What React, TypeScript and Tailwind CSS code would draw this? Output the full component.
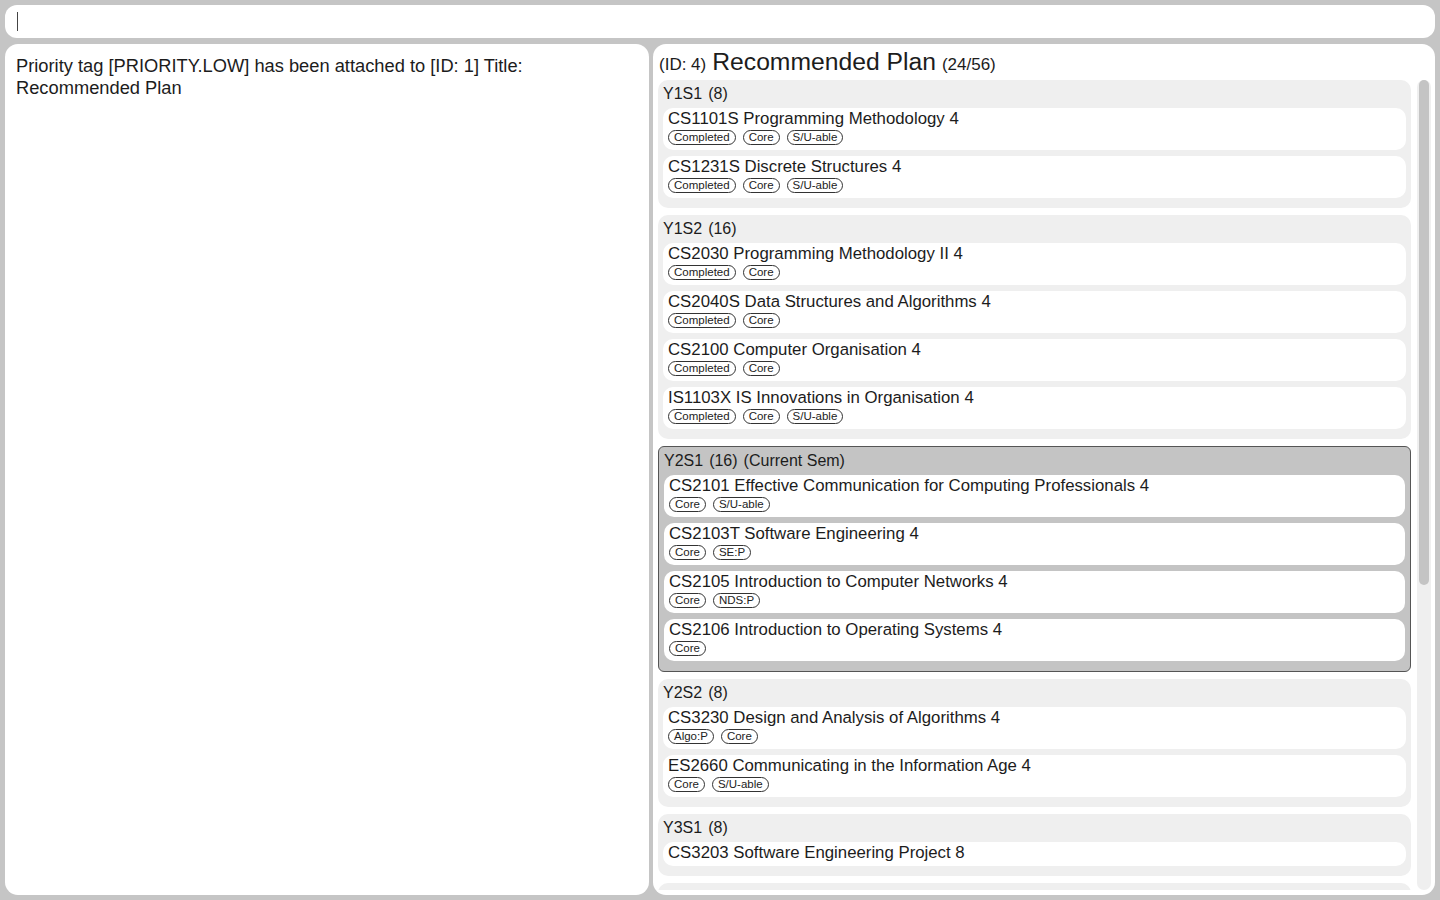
import React from "react";

type Mod = { code: string; title: string; mc: number; tags: string[] };
type Sem = { name: string; mc: number; current?: boolean; mods: Mod[] };

const sems: Sem[] = [
  {
    name: "Y1S1",
    mc: 8,
    mods: [
      { code: "CS1101S", title: "Programming Methodology", mc: 4, tags: ["Completed", "Core", "S/U-able"] },
      { code: "CS1231S", title: "Discrete Structures", mc: 4, tags: ["Completed", "Core", "S/U-able"] },
    ],
  },
  {
    name: "Y1S2",
    mc: 16,
    mods: [
      { code: "CS2030", title: "Programming Methodology II", mc: 4, tags: ["Completed", "Core"] },
      { code: "CS2040S", title: "Data Structures and Algorithms", mc: 4, tags: ["Completed", "Core"] },
      { code: "CS2100", title: "Computer Organisation", mc: 4, tags: ["Completed", "Core"] },
      { code: "IS1103X", title: "IS Innovations in Organisation", mc: 4, tags: ["Completed", "Core", "S/U-able"] },
    ],
  },
  {
    name: "Y2S1",
    mc: 16,
    current: true,
    mods: [
      { code: "CS2101", title: "Effective Communication for Computing Professionals", mc: 4, tags: ["Core", "S/U-able"] },
      { code: "CS2103T", title: "Software Engineering", mc: 4, tags: ["Core", "SE:P"] },
      { code: "CS2105", title: "Introduction to Computer Networks", mc: 4, tags: ["Core", "NDS:P"] },
      { code: "CS2106", title: "Introduction to Operating Systems", mc: 4, tags: ["Core"] },
    ],
  },
  {
    name: "Y2S2",
    mc: 8,
    mods: [
      { code: "CS3230", title: "Design and Analysis of Algorithms", mc: 4, tags: ["Algo:P", "Core"] },
      { code: "ES2660", title: "Communicating in the Information Age", mc: 4, tags: ["Core", "S/U-able"] },
    ],
  },
  {
    name: "Y3S1",
    mc: 8,
    mods: [{ code: "CS3203", title: "Software Engineering Project", mc: 8, tags: [] }],
  },
  {
    name: "Y3S2",
    mc: 4,
    mods: [{ code: "CS3244", title: "Machine Learning", mc: 4, tags: ["Core"] }],
  },
];

function ModuleCard({ m }: { m: Mod }) {
  return (
    <div className="bg-white rounded-[10px] px-[5px] pt-[1px] pb-[3px]">
      <div className="text-[16.8px] leading-[20px] text-[#1c1c1c] whitespace-nowrap">
        {m.code} {m.title} {m.mc}
      </div>
      {m.tags.length > 0 && (
        <div className="flex gap-[7px] mt-[1px] mb-[2px]">
          {m.tags.map((t) => (
            <span
              key={t}
              className="border border-[#333] rounded-full px-[5px] text-[11.5px] leading-[13px] text-[#222]"
            >
              {t}
            </span>
          ))}
        </div>
      )}
    </div>
  );
}

function SemCard({ s }: { s: Sem }) {
  return (
    <div
      className={
        s.current
          ? "bg-[#c4c4c4] border border-[#555] rounded-[6px] px-[5px] pt-[3px] pb-[10px] shrink-0"
          : "bg-[#efefef] rounded-[10px] px-[5px] pt-[3px] pb-[10px] shrink-0"
      }
    >
      <div className="flex gap-[6px] text-[16px] leading-[20px] pt-[1px] text-[#1c1c1c] mb-[4px]">
        <span>{s.name}</span>
        <span>({s.mc})</span>
        {s.current && <span>(Current Sem)</span>}
      </div>
      <div className="flex flex-col gap-[6px]">
        {s.mods.map((m) => (
          <ModuleCard key={m.code} m={m} />
        ))}
      </div>
    </div>
  );
}

export default function App() {
  return (
    <div
      className="h-screen w-full bg-[#c5c5c5] p-[5px] flex flex-col gap-[6px] overflow-hidden"
      style={{ fontFamily: '"Liberation Sans", Arial, sans-serif' }}
    >
      <div className="h-[33px] shrink-0 bg-white rounded-[12px] flex items-center pl-[12px]">
        <div className="w-[1px] h-[19px] bg-[#444]" />
      </div>
      <div className="flex-1 min-h-0 flex gap-[4px]">
        <div className="w-[644px] shrink-0 bg-white rounded-[13px] p-[11px] text-[18.3px] leading-[22px] text-[#1c1c1c]">
          Priority tag [PRIORITY.LOW] has been attached to [ID: 1] Title: Recommended Plan
        </div>
        <div className="flex-1 min-w-0 bg-white rounded-[13px] pl-[5px] pr-[4px] pt-[4px] pb-[5px] flex flex-col">
          <div className="flex items-baseline gap-[6px] h-[28px] mb-[4px] pl-[1px] text-[#1c1c1c]">
            <span className="text-[17px] leading-[28px]">(ID: 4)</span>
            <span className="text-[24.7px] leading-[28px]">Recommended Plan</span>
            <span className="text-[17px] leading-[28px]">(24/56)</span>
          </div>
          <div className="flex-1 min-h-0 flex gap-[6px]">
            <div className="flex-1 min-w-0 overflow-hidden flex flex-col gap-[7px]">
              {sems.map((s) => (
                <SemCard key={s.name} s={s} />
              ))}
            </div>
            <div className="w-[14px] shrink-0 bg-[#efefef] rounded-full px-[2px]">
              <div className="w-[10px] h-[505px] bg-[#c4c4c4] rounded-full" />
            </div>
          </div>
        </div>
      </div>
    </div>
  );
}
